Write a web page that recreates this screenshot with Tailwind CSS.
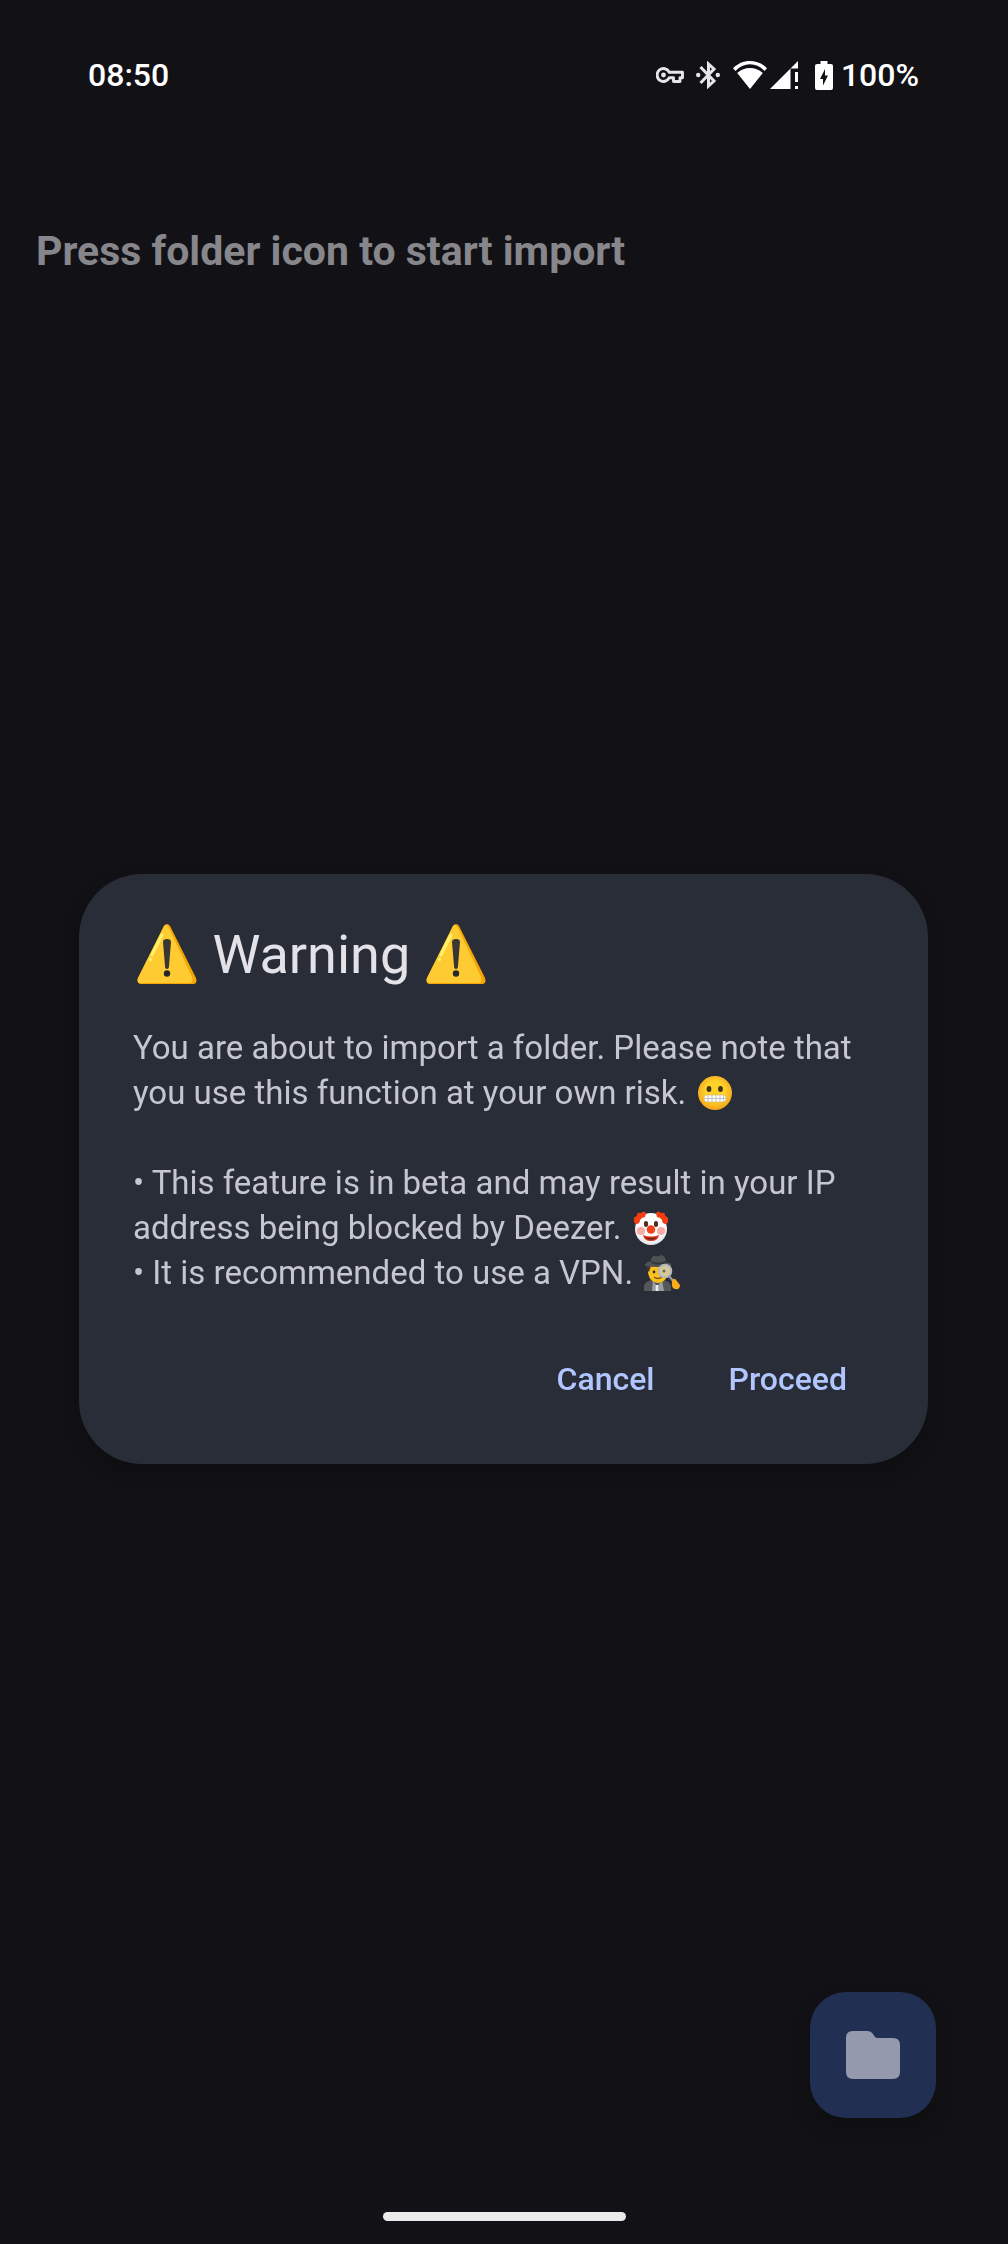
<!DOCTYPE html>
<html lang="en">
<head>
<meta charset="utf-8">
<meta name="viewport" content="width=device-width, initial-scale=1">
<title>Import</title>
<script src="https://cdn.jsdelivr.net/npm/@tailwindcss/browser@4"></script>
</head>
<body class="flex min-h-screen flex-col bg-[#121116] font-[Roboto,sans-serif]">
<svg class="absolute size-0" aria-hidden="true">
  <defs>
    <radialGradient id="face" cx=".5" cy=".45" r=".55"><stop offset=".5" stop-color="#fdd32a"/><stop offset="1" stop-color="#f5a51c"/></radialGradient>
    <radialGradient id="white" cx=".5" cy=".45" r=".55"><stop offset=".7" stop-color="#fff"/><stop offset="1" stop-color="#dfe1e4"/></radialGradient>
    <symbol id="warn" viewBox="0 0 60 60">
      <path d="M27 2Q30-2 33 2L59 54Q61 60 55 60H5Q-1 60 1 54Z" fill="#f5a603"/>
      <path d="M27 2Q29-1 32 4L55 53Q57 59 52 59H5Q-1 59 1 54Z" fill="#ffcb32"/>
      <path d="M25 11L15 31" stroke="#fff170" stroke-width="3" stroke-linecap="round"/><circle cx="13.500" cy="35.500" r="1.700" fill="#fff170"/>
      <path d="M26 18Q26 15 30 15T34 18L32 42Q32 45 30 45T28 42Z" fill="#383733"/><circle cx="30" cy="49.500" r="3.200" fill="#26292b"/>
    </symbol>
  </defs>
</svg>

<header class="flex h-[150px] items-center justify-between pr-[89px] pl-[88px] text-[32px]/10 font-medium text-white">
  <time>08:50</time>
  <div class="flex items-center">
    <svg class="mr-3 h-[18px] w-7" viewBox="0 0 28 18" fill="none" stroke="#e6e6e8" stroke-width="2.900" stroke-linejoin="round"><path d="M13.300 6.300A6.400 6.400 0 1 0 13.300 11.700H17.500V15.500H24V11.700H26.500V6.300Z"/><circle cx="7.500" cy="9" r="2.400" fill="#e6e6e8" stroke="none"/></svg>
    <svg class="mr-[13px] h-7 w-6" viewBox="0 0 24 28" fill="none" stroke="#e6e6e8" stroke-width="3"><path d="M4.500 6L18 20L12.500 25V3L18 8L4.500 22"/><circle cx="2.200" cy="14" r="2.200" fill="#e6e6e8" stroke="none"/><circle cx="21.800" cy="14" r="2.200" fill="#e6e6e8" stroke="none"/></svg>
    <svg class="mr-[3px] h-7 w-[34px]" viewBox="0 0 34 28" fill="#fff"><path d="M17 0C10.500 0 4.500 2.500 0 7.300L2.500 10C6.500 5.500 11.500 3.300 17 3.300S27.500 5.500 31.500 10L34 7.300C29.500 2.500 23.500 0 17 0Z"/><path d="M17 28L4.200 12C8 8.500 12.300 7 17 7S26 8.500 29.800 12Z"/></svg>
    <svg class="mr-4 h-7 w-[29px]" viewBox="0 0 29 28" fill="#fff"><path d="M28 0V7.500H20.500V28H0ZM25 11H28V21H25ZM25 25H28V28H25Z"/></svg>
    <svg class="mr-2 h-[29px] w-[18px]" viewBox="0 0 18 29"><path d="M5.500 0H12.500V3H16Q18 3 18 5V27Q18 29 16 29H2Q0 29 0 27V5Q0 3 2 3H5.500Z" fill="#fff"/><path d="M10 8L5 18H8V24.500L13 14.500H10Z" fill="#121116"/></svg>
    <span>100%</span>
  </div>
</header>

<main class="flex-1 px-9 pt-[73px]">
  <h1 class="text-[41px]/14 font-bold text-[#86868b]">Press folder icon to start import</h1>
</main>

<footer class="flex flex-col">
  <button type="button" aria-label="Choose folder" class="mr-[72px] mb-[94px] grid size-[126px] place-items-center self-end rounded-[36px] bg-[#212f52] shadow-[0_10px_18px_rgba(14,16,16,0.9)]">
    <svg class="h-12 w-[54px]" viewBox="0 0 54 48" fill="#9499ad" aria-hidden="true"><path d="M7 0H21Q25 0 27 3L29 6Q30 7 32 7H47Q54 7 54 14V41Q54 48 47 48H7Q0 48 0 41V7Q0 0 7 0Z"/></svg>
  </button>
  <div class="mb-[23px] h-[9px] w-[243px] self-center rounded-full bg-[#ebebeb]"></div>
</footer>

<div class="fixed inset-0 flex items-center justify-center pt-[94px] pr-20 pl-[79px]">
  <section role="alertdialog" aria-modal="true" aria-labelledby="title" aria-describedby="message" class="w-full rounded-[63px] bg-[#292d37] px-[54px] pt-[45px] pb-10 shadow-[0_8px_16px_rgba(14,14,14,0.8)]">
    <h2 id="title" class="text-[54px]/18 text-[#e3e2e9]"><svg role="img" aria-label="Warning sign" class="mr-0.5 ml-1 inline size-[60px] align-[-11px]"><use href="#warn"/></svg> Warning <svg role="img" aria-label="Warning sign" class="mr-0.5 ml-0.5 inline size-[60px] align-[-11px]"><use href="#warn"/></svg></h2>
    <div id="message" class="mt-[34px] text-[33px]/[45px] text-[#c5c6d0]">
      <p>You are about to import a folder. Please note that<br>you use this function at your own risk. <svg role="img" aria-label="Grimacing face" class="mx-[3px] inline h-[34px] w-9 align-[-6px]" viewBox="0 0 34 34"><circle cx="17" cy="17" r="17" fill="url(#face)"/><ellipse cx="11" cy="13" rx="2.400" ry="3" fill="#403020"/><ellipse cx="22.500" cy="13" rx="2.400" ry="3" fill="#403020"/><rect x="6" y="19" width="22" height="7" rx="3" fill="#fff" stroke="#d8b55a" stroke-width=".6"/><path d="M6 22.500H28M10 19V26M14 19V26M18 19V26M22 19V26M25.500 19V26" stroke="#aeb4b8" stroke-width=".8"/></svg></p>
      <p class="mt-[45px]">• This feature is in beta and may result in your IP<br>address being blocked by Deezer. <svg role="img" aria-label="Clown face" class="mx-[3px] inline h-[34px] w-9 align-[-6px]" viewBox="0 0 36 34"><circle cx="18" cy="18" r="16" fill="url(#white)"/><path d="M1 10Q0 6 4 5Q3 1 8 2Q11-1 13 2L12 6Q9 6 7 9Q7 12 4 13Q1 13 1 10ZM35 10Q36 6 32 5Q33 1 28 2Q25-1 23 2L24 6Q27 6 29 9Q29 12 32 13Q35 13 35 10Z" fill="#f33d12"/><circle cx="8" cy="20" r="4" fill="#f8aaa7"/><circle cx="28" cy="20" r="4" fill="#f8aaa7"/><ellipse cx="13" cy="13" rx="2.100" ry="3" fill="#4d3022"/><ellipse cx="23" cy="13" rx="2.100" ry="3" fill="#4d3022"/><path d="M10 24Q18 27 26 24Q25 30 18 30T10 24Z" fill="#d8341f"/><path d="M13 26.500Q18 28 23 26.500Q22 28.500 18 28.500T13 26.500Z" fill="#522016"/><circle cx="18" cy="18.500" r="4.300" fill="#f4421a"/></svg></p>
      <p>• It is recommended to use a VPN. <svg role="img" aria-label="Detective" class="mx-[3px] inline size-9 align-[-7px]" viewBox="0 0 36 36"><path d="M0 36V31Q1 26 9 25H20Q26 27 27 31V36Z" fill="#55575a"/><path d="M9 25L13 32L18 25L20 36H8Z" fill="#9b9da0"/><path d="M13 30V36" stroke="#eceeef" stroke-width="2.500"/><path d="M4 10H24V17Q23 27 14 28Q5 27 4 17Z" fill="#fcc21b"/><path d="M3 9Q3 16 5 17L7 11Z" fill="#4b3a33"/><circle cx="10" cy="17" r="1.400" fill="#3c2b25"/><path d="M10 22Q14 25 18 22" stroke="#805020" stroke-width="1.400" fill="none"/><path d="M7 6Q7 1 11 1Q14 2 17 0Q22 1 22 7Q29 8 27 11Q14 13 1 11Q0 8 7 6Z" fill="#4f5255"/><path d="M7 6Q14 9 22 6V8Q14 11 7 8Z" fill="#34373a"/><circle cx="21" cy="16" r="6.300" fill="#d8c999" stroke="#b3babd" stroke-width="2"/><circle cx="20" cy="16" r="1.600" fill="#71685a"/><path d="M25 21L30 27" stroke="#90989c" stroke-width="2.500"/><path d="M28 26Q30 22 32 25L36 30Q36 35 31 34Q27 33 28 26Z" fill="#fbad19"/></svg></p>
    </div>
    <div class="mt-[39px] flex justify-end gap-5 text-[32px]/10 font-medium text-[#b1c5ff]">
      <button type="button" class="h-[90px] px-[27px]">Cancel</button>
      <button type="button" class="h-[90px] px-[27px]">Proceed</button>
    </div>
  </section>
</div>
</body>
</html>
